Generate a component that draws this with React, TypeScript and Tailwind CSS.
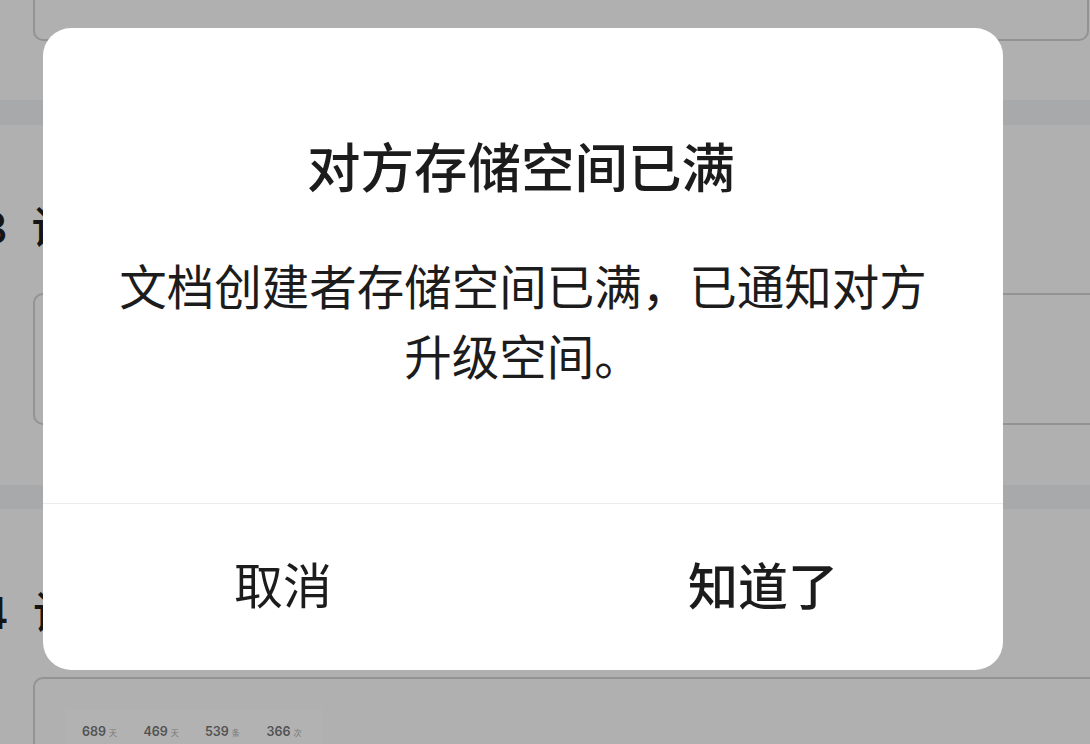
const cjk = "font-['Inter','Noto_Sans_CJK_SC',sans-serif]";

function Stat({ value, unit }: { value: string; unit: string }) {
  return (
    <div className="w-[61.5px] shrink-0 flex items-baseline gap-[3px]">
      <span className="text-[12.5px] font-semibold text-[#525252]">{value}</span>
      <span className="text-[8px] text-[#777]">{unit}</span>
    </div>
  );
}

function Background() {
  return (
    <div className="flex flex-col h-[744px] overflow-hidden bg-[#b0b0b0] text-[#151515]">
      <div className="ml-[33px] mr-[1px] mt-[-20px] h-[61px] shrink-0 rounded-[10px] border-2 border-[#939393]" />
      <div className="mt-[59px] h-[25px] shrink-0 bg-[#a8a9ab]" />
      <h2 className="mt-[72px] ml-[-20px] h-[62px] shrink-0 text-[44px] leading-[62px] font-medium whitespace-nowrap">
        3<span className="ml-[24px]">设计</span>
      </h2>
      <div className="mt-[34px] ml-[33px] mr-[-10px] h-[132px] shrink-0 rounded-[10px] border-2 border-[#939393]" />
      <div className="mt-[60px] h-[24px] shrink-0 bg-[#a8a9ab]" />
      <h2 className="mt-[73px] ml-[-20px] h-[62px] shrink-0 text-[44px] leading-[62px] font-medium whitespace-nowrap">
        4<span className="ml-[24px]">设计</span>
      </h2>
      <div className="mt-[33px] ml-[33px] mr-[-10px] h-[120px] shrink-0 rounded-[10px] border-2 border-[#939393] pt-[30px] pl-[30px]">
        <div className="w-[257px] h-[60px] bg-[#b2b2b2] pl-[17px] pt-[14px] flex">
          <Stat value="689" unit="天" />
          <Stat value="469" unit="天" />
          <Stat value="539" unit="条" />
          <Stat value="366" unit="次" />
        </div>
      </div>
    </div>
  );
}

export default function App() {
  return (
    <div className={`relative w-[1090px] h-[744px] overflow-hidden ${cjk}`}>
      <Background />
      <div className="absolute left-[43px] top-[28px] w-[960px] h-[642px] rounded-[28px] bg-white flex flex-col text-[#1c1c1c]">
        <div className="h-[476px] flex flex-col items-center px-[72px] text-center border-b border-[#ececec]">
          <h1 className="mt-[104px] mr-[4px] text-[53.5px] leading-[74px] font-medium">对方存储空间已满</h1>
          <p className="mt-[47px] text-[47.5px] leading-[70px]">文档创建者存储空间已满，已通知对方升级空间。</p>
        </div>
        <div className="flex-1 flex">
          <button className="flex-1 text-[49px]">取消</button>
          <button className="flex-1 text-[50px] font-medium">知道了</button>
        </div>
      </div>
    </div>
  );
}
